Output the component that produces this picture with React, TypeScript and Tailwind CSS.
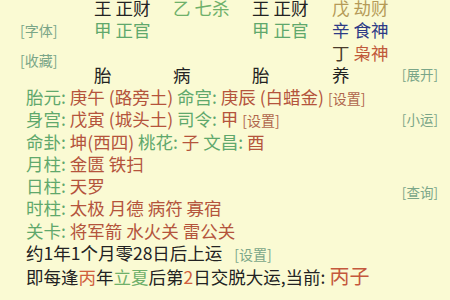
const G = 'text-[#5fa86c]';
const R = 'text-[#b4543c]';

function Pillar({ top, mid, low, state, w = 'w-[79px]' }: { top: React.ReactNode; mid?: React.ReactNode; low?: React.ReactNode; state: string; w?: string }) {
  return (
    <div className={`flex flex-col shrink-0 ${w}`}>
      <div className="h-[22.25px] whitespace-nowrap">{top}</div>
      <div className="h-[22.25px] whitespace-nowrap">{mid}</div>
      <div className="h-[22.25px] whitespace-nowrap">{low}</div>
      <div className="h-[22.25px] text-[#222]">{state}</div>
    </div>
  );
}

function Row({ label, children }: { label: string; children: React.ReactNode }) {
  return (
    <div className="h-[22.25px] whitespace-nowrap">
      <span className={G}>{label}: </span>
      {children}
    </div>
  );
}

export default function App() {
  return (
    <div
      className="w-[450px] h-[300px] overflow-hidden bg-[#fafad3] text-[17.5px] leading-[22.25px]"
      style={{ fontFamily: '"Noto Sans CJK SC", "Noto Sans", sans-serif' }}
    >
      <div className="flex mt-[-3px] h-[89px]">
        {/* left tools */}
        <div className="w-[94px] shrink-0 pl-[20px] flex flex-col text-[14px] text-[#7aa688] whitespace-nowrap">
          <span className="mt-[22px]">[字体]</span>
          <span className="mt-[8px]">[收藏]</span>
        </div>

        {/* pillars */}
        <Pillar
          top={<span className="text-[#222]">王 正财</span>}
          mid={<span className={G}>甲 正官</span>}
          state="胎"
        />
        <Pillar top={<span className="text-[#6fb06a]">乙 七杀</span>} state="病" />
        <Pillar
          w="w-[80px]"
          top={<span className="text-[#222]">王 正财</span>}
          mid={<span className={G}>甲 正官</span>}
          state="胎"
        />
        <Pillar
          w="w-[68px]"
          top={<span className="text-[#b59a58]">戊 劫财</span>}
          mid={<span className="text-[#2d3a86]">辛 食神</span>}
          low={
            <>
              <span className="text-[#4a3a2a]">丁 </span>
              <span className="text-[#c0583a]">枭神</span>
            </>
          }
          state="养"
        />

        {/* right tools */}
        <div className="flex-1 min-w-0 flex flex-col items-end pr-[12px] text-[13.5px] text-[#7aa688] whitespace-nowrap">
          <span className="mt-[66px]">[展开]</span>
        </div>
      </div>

      <div className="flex">
        <div className="pl-[26px] flex-1 min-w-0">
          <Row label="胎元">
            <span className={R}>庚午 (路旁土)</span> <span className={G}>命宫: </span>
            <span className={R}>庚辰 (白蜡金)</span> <span className="text-[14px] text-[#b0664c]">[设置]</span>
          </Row>
          <Row label="身宫">
            <span className={R}>戊寅 (城头土)</span> <span className={G}>司令: </span>
            <span className={R}>甲</span> <span className="text-[14px] text-[#b0664c]">[设置]</span>
          </Row>
          <Row label="命卦">
            <span className={R}>坤(西四)</span> <span className={G}>桃花: </span>
            <span className={R}>子</span> <span className={G}>文昌: </span>
            <span className={R}>酉</span>
          </Row>
          <Row label="月柱">
            <span className={R}>金匮 铁扫</span>
          </Row>
          <Row label="日柱">
            <span className={R}>天罗</span>
          </Row>
          <Row label="时柱">
            <span className={R}>太极 月德 病符 寡宿</span>
          </Row>
          <Row label="关卡">
            <span className={R}>将军箭 水火关 雷公关</span>
          </Row>
          <div className="h-[23px] mt-[0.5px] whitespace-nowrap text-[#222]">
            约1年1个月零28日后上运<span className="ml-[12px] text-[14px] text-[#7aa688]">[设置]</span>
          </div>
          <div className="h-[23px] whitespace-nowrap text-[#222]">
            即每逢<span className="text-[#d0603e]">丙</span>年<span className="text-[#6fb06a]">立夏</span>后第
            <span className="text-[#d0603e]">2</span>日交脱大运,当前: <span className="text-[20px] text-[#c4583c]">丙子</span>
          </div>
        </div>
        <div className="w-[60px] shrink-0 flex flex-col items-end pr-[12px] text-[13.5px] text-[#7aa688] whitespace-nowrap">
          <span className="mt-[22px]">[小运]</span>
          <span className="mt-[51px]">[查询]</span>
        </div>
      </div>
    </div>
  );
}
